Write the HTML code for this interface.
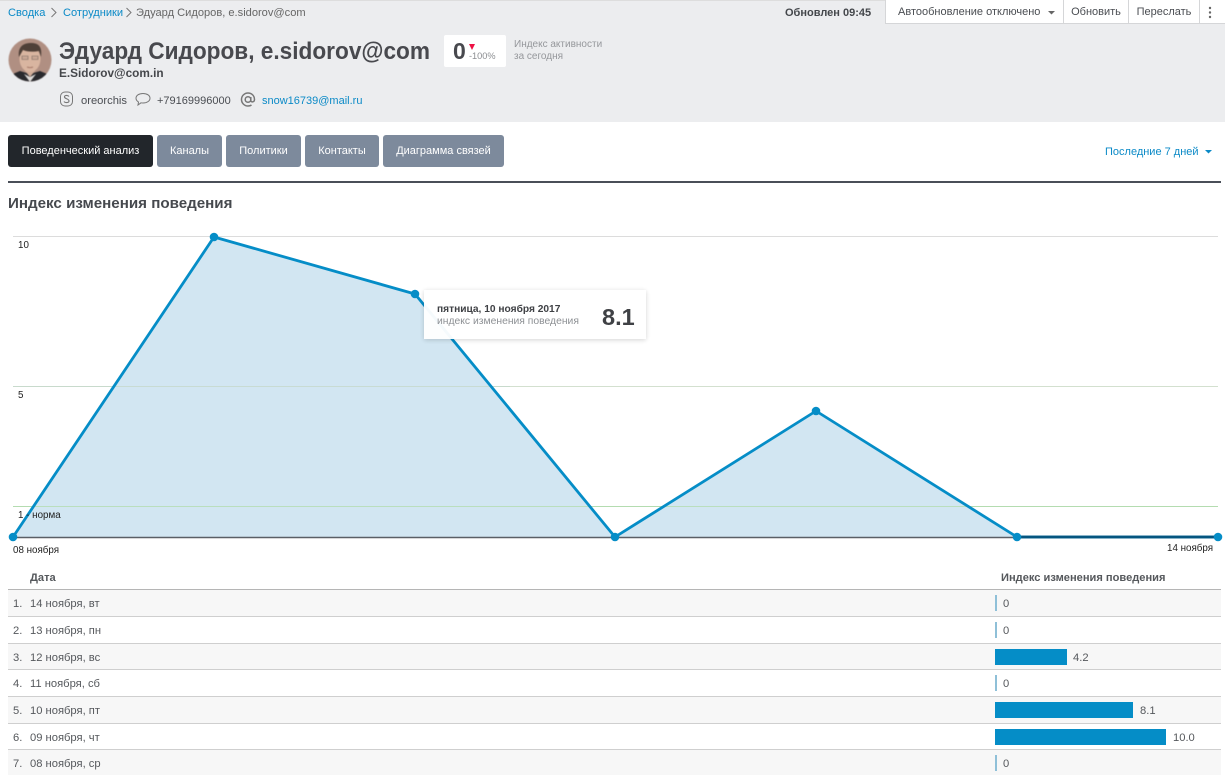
<!DOCTYPE html>
<html lang="ru"><head><meta charset="utf-8"><title>Эдуард Сидоров</title>
<style>
html,body{margin:0;padding:0;background:#fff}
body{width:1225px;height:775px;position:relative;overflow:hidden;font-family:"Liberation Sans","Noto Sans CJK SC",sans-serif;font-size:11px;color:#4a4d52}
.t{position:absolute;white-space:nowrap;line-height:14px}
.a{color:#0b8ac7}
.hd{position:absolute;left:0;top:0;width:1225px;height:122px;background:#ecedef;border-top:1px solid #ddd;box-sizing:border-box}
.tb{position:absolute;top:0;height:24px;background:#fff;border-right:1px solid #d5d6d8;border-bottom:1px solid #d5d6d8;box-sizing:border-box;line-height:25px;text-align:center;color:#4a4d52;font-size:11px}
.tab{position:absolute;top:135px;height:32px;line-height:33px;background:#7d8a9c;color:#fff;border-radius:3px;text-align:center;font-size:11px}
.row{position:absolute;left:8px;width:1213px;border-bottom:1px solid #cfcfcf;box-sizing:border-box}
.row.o{background:#f7f7f7}
.bar{position:absolute;left:995px;height:16px;background:#058dc7}
.z{position:absolute;left:995px;width:1.5px;height:16px;background:#8fc0d8}
.r{color:#55585c;font-size:11.2px}
</style></head><body>
<div class="hd"></div>
<div class="t a" style="left:8px;top:6px;font-size:11.1px">Сводка</div>
<svg style="position:absolute;left:50px;top:7px" width="8" height="11"><path d="M1.5 1l4.5 4.500L1.500 10" fill="none" stroke="#777" stroke-width="1"/></svg>
<div class="t a" style="left:63px;top:6px;font-size:11.1px">Сотрудники</div>
<svg style="position:absolute;left:125px;top:7px" width="8" height="11"><path d="M1.5 1l4.5 4.500L1.500 10" fill="none" stroke="#777" stroke-width="1"/></svg>
<div class="t" style="left:136px;top:6px;font-size:11.1px;color:#666">Эдуард Сидоров, e.sidorov@com</div>
<div class="t" style="left:785px;top:6px;font-weight:bold;font-size:11px;color:#44474b">Обновлен 09:45</div>
<div class="tb" style="left:885px;width:179px;border-left:1px solid #d5d6d8;text-align:left;padding-left:12px">Автообновление отключено</div>
<svg style="position:absolute;left:1048px;top:11px" width="8" height="4"><path d="M0 0h7L3.5 3.5z" fill="#666"/></svg>
<div class="tb" style="left:1064px;width:65px">Обновить</div>
<div class="tb" style="left:1129px;width:71px">Переслать</div>
<div class="tb" style="left:1200px;width:25px;border-right:none"></div>
<svg style="position:absolute;left:1208px;top:6px" width="4" height="14"><circle cx="2" cy="2" r="1.2" fill="#666"/><circle cx="2" cy="6.5" r="1.2" fill="#666"/><circle cx="2" cy="11" r="1.2" fill="#666"/></svg>
<svg style="position:absolute;left:8px;top:38px;filter:blur(.5px)" width="44" height="44" viewBox="0 0 44 44">
<defs><clipPath id="c"><circle cx="22" cy="22" r="21.5"/></clipPath></defs>
<g clip-path="url(#c)"><rect width="44" height="44" fill="#b08f82"/>
<path d="M0 44V38l12-5 10 3 10-3 12 5v6z" fill="#2a2a2e"/><path d="M17 33l5 6 5-6-1-4h-8z" fill="#d0ac98"/><path d="M16 36l6 8 6-8-6 3z" fill="#dedbd8"/>
<ellipse cx="22" cy="21" rx="10.5" ry="13" fill="#d9b5a0"/><path d="M11 19C9.500 8 16 5 23 5s11.500 3 10 14l-2-6c-5 1-12 1-16-1z" fill="#4f4038"/>
<path d="M14 18h6v3.500h-6zM24 18h6v3.500h-6z" fill="#c9a794" stroke="#7a6a60" stroke-width=".6"/><path d="M19 29c2 .8 4 .8 6 0" stroke="#a87c6c" stroke-width="1" fill="none"/></g></svg>
<svg style="position:absolute;left:59px;top:36px;overflow:visible" width="372" height="30"><text x="0" y="23" font-family="Liberation Sans" font-weight="bold" font-size="24.5" fill="#48494e" textLength="371" lengthAdjust="spacingAndGlyphs">Эдуард Сидоров, e.sidorov@com</text></svg>
<div class="t" style="left:59px;top:66px;font-size:11.8px;font-weight:bold;color:#45474b">E.Sidorov@com.in</div>
<svg style="position:absolute;left:59px;top:91px" width="15" height="16" viewBox="0 0 15 16" fill="none" stroke="#777"><rect x="1.500" y="1" width="12" height="14" rx="4.500"/><path d="M10 5.500C9 4 5 4 5.500 6.200 6 8 10 7.500 10 10c0 2-4 2-5 .5" stroke-width="1.100"/></svg>
<div class="t" style="left:81px;top:94px;font-size:11.2px">oreorchis</div>
<svg style="position:absolute;left:135px;top:92px" width="16" height="15" viewBox="0 0 16 15" fill="none" stroke="#777"><path d="M8 1.500c4 0 7 2 7 4.700S12 11 8 11c-1 0-1.500 0-2-.2L3 13l.5-3C2 9 1 7.600 1 6.200 1 3.500 4 1.500 8 1.500z"/></svg>
<div class="t" style="left:157px;top:94px;font-size:11px">+79169996000</div>
<svg style="position:absolute;left:240px;top:92px" width="16" height="15" viewBox="0 0 16 15" fill="none" stroke="#777" stroke-width="1.500"><circle cx="8" cy="7.500" r="2.800"/><path d="M10.800 5v3.500c0 2 3.700 2 3.700-1C14.500 3.500 11.500 1 8 1 4.400 1 1.500 3.900 1.500 7.500S4.400 14 8 14c1.500 0 2.600-.3 3.500-1"/></svg>
<div class="t a" style="left:262px;top:94px;font-size:11px">snow16739@mail.ru</div>
<div style="position:absolute;left:444px;top:35px;width:62px;height:32px;background:#fff;border-radius:2px"></div>
<div class="t" style="left:453px;top:39px;font-size:23px;line-height:24px;font-weight:bold;color:#48494e">0</div>
<svg style="position:absolute;left:468px;top:44px" width="8" height="7"><path d="M1 0h6L4 6z" fill="#ee1144"/></svg>
<div class="t" style="left:469px;top:50px;font-size:9.2px;color:#8c8e92;line-height:12px">-100%</div>
<div class="t" style="left:514px;top:38px;font-size:10px;color:#95979b">Индекс активности</div>
<div class="t" style="left:514px;top:50px;font-size:10px;color:#95979b">за сегодня</div>

<div class="tab" style="left:8px;width:145px;background:#22262b">Поведенческий анализ</div>
<div class="tab" style="left:157px;width:65px">Каналы</div>
<div class="tab" style="left:226px;width:75px">Политики</div>
<div class="tab" style="left:305px;width:74px">Контакты</div>
<div class="tab" style="left:383px;width:121px">Диаграмма связей</div>
<div class="t a" style="left:1105px;top:145px;font-size:11px">Последние 7 дней</div>
<svg style="position:absolute;left:1205px;top:150px" width="8" height="4"><path d="M0 0h7L3.500 3.500z" fill="#0b8ac7"/></svg>
<div style="position:absolute;left:8px;top:181px;width:1213px;height:1.500px;background:#4a4f58"></div>
<div class="t" style="left:8px;top:195px;font-size:15.15px;line-height:17px;font-weight:bold;color:#46494e">Индекс изменения поведения</div>

<svg style="position:absolute;left:0;top:225px" width="1225" height="335" viewBox="0 225 1225 335">
<line x1="13" y1="236.500" x2="1218" y2="236.500" stroke="#dcdcdc"/>
<line x1="13" y1="386.500" x2="1218" y2="386.500" stroke="#d3e0cf"/>
<line x1="13" y1="506.500" x2="1218" y2="506.500" stroke="#b4dcb0"/>
<path d="M13 537L214 237 415 294 615 537 816 411 1017 537 1218 537z" fill="#d2e6f2"/>
<line x1="13" y1="537.500" x2="1218" y2="537.500" stroke="#5a5f66" stroke-width="1.500"/>
<line x1="13" y1="506.500" x2="1017" y2="506.500" stroke="#b4dcb0" stroke-opacity=".8"/>
<line x1="13" y1="386.500" x2="510" y2="386.500" stroke="#c6d8cb" stroke-opacity=".8"/>
<path d="M13 537L214 237 415 294 615 537 816 411 1017 537 1218 537" fill="none" stroke="#058dc7" stroke-width="2.800" stroke-linejoin="round"/>
<line x1="1017" y1="537" x2="1218" y2="537" stroke="#05557f" stroke-width="2.800"/>
<g fill="#058dc7"><circle cx="13" cy="537" r="4.300"/><circle cx="214" cy="237" r="4.300"/><circle cx="415" cy="294" r="4.300"/><circle cx="615" cy="537" r="4.300"/><circle cx="816" cy="411" r="4.300"/><circle cx="1017" cy="537" r="4.300"/><circle cx="1218" cy="537" r="4.300"/></g>
<g font-family="Liberation Sans" font-size="9.800" fill="#222"><text x="18" y="248">10</text><text x="18" y="398">5</text><text x="18" y="518">1 - норма</text><text x="13" y="553">08 ноября</text><text x="1167" y="551">14 ноября</text></g>
</svg>

<div style="position:absolute;left:424px;top:290px;width:222px;height:49px;background:#fff;opacity:.96;box-shadow:0 1px 5px rgba(0,0,0,.18)"></div>
<div class="t" style="left:437px;top:303px;font-size:10.2px;font-weight:bold;color:#3f4145">пятница, 10 ноября 2017</div>
<div class="t" style="left:437px;top:315px;font-size:10.35px;color:#8d9094">индекс изменения поведения</div>
<div class="t" style="left:602px;top:304px;font-size:23.500px;line-height:26px;font-weight:bold;color:#3f4145">8.1</div>

<div class="t" style="left:30px;top:571px;font-size:11.100px;font-weight:bold;color:#55585c">Дата</div>
<div class="t" style="left:1001px;top:571px;font-size:11.100px;font-weight:bold;color:#55585c">Индекс изменения поведения</div>
<div style="position:absolute;left:8px;top:589px;width:1213px;height:1.500px;background:#b5b5b5"></div>

<div class="row o" style="top:590px;height:27px"></div>
<div class="row" style="top:617px;height:27px"></div>
<div class="row o" style="top:644px;height:26px"></div>
<div class="row" style="top:670px;height:27px"></div>
<div class="row o" style="top:697px;height:27px"></div>
<div class="row" style="top:724px;height:26px"></div>
<div class="row o" style="top:750px;height:25px;border:none"></div>

<div class="t r" style="left:13px;top:597px">1.</div><div class="t r" style="left:30px;top:597px">14 ноября, вт</div>
<div class="t r" style="left:13px;top:624px">2.</div><div class="t r" style="left:30px;top:624px">13 ноября, пн</div>
<div class="t r" style="left:13px;top:651px">3.</div><div class="t r" style="left:30px;top:651px">12 ноября, вс</div>
<div class="t r" style="left:13px;top:677px">4.</div><div class="t r" style="left:30px;top:677px">11 ноября, сб</div>
<div class="t r" style="left:13px;top:704px">5.</div><div class="t r" style="left:30px;top:704px">10 ноября, пт</div>
<div class="t r" style="left:13px;top:731px">6.</div><div class="t r" style="left:30px;top:731px">09 ноября, чт</div>
<div class="t r" style="left:13px;top:757px">7.</div><div class="t r" style="left:30px;top:757px">08 ноября, ср</div>

<div class="z" style="top:595px"></div><div class="t r" style="left:1003px;top:597px">0</div>
<div class="z" style="top:622px"></div><div class="t r" style="left:1003px;top:624px">0</div>
<div class="bar" style="top:649px;width:72px"></div><div class="t r" style="left:1073px;top:651px">4.2</div>
<div class="z" style="top:675px"></div><div class="t r" style="left:1003px;top:677px">0</div>
<div class="bar" style="top:702px;width:138px"></div><div class="t r" style="left:1140px;top:704px">8.1</div>
<div class="bar" style="top:729px;width:171px"></div><div class="t r" style="left:1173px;top:731px">10.0</div>
<div class="z" style="top:755px"></div><div class="t r" style="left:1003px;top:757px">0</div>
</body></html>
